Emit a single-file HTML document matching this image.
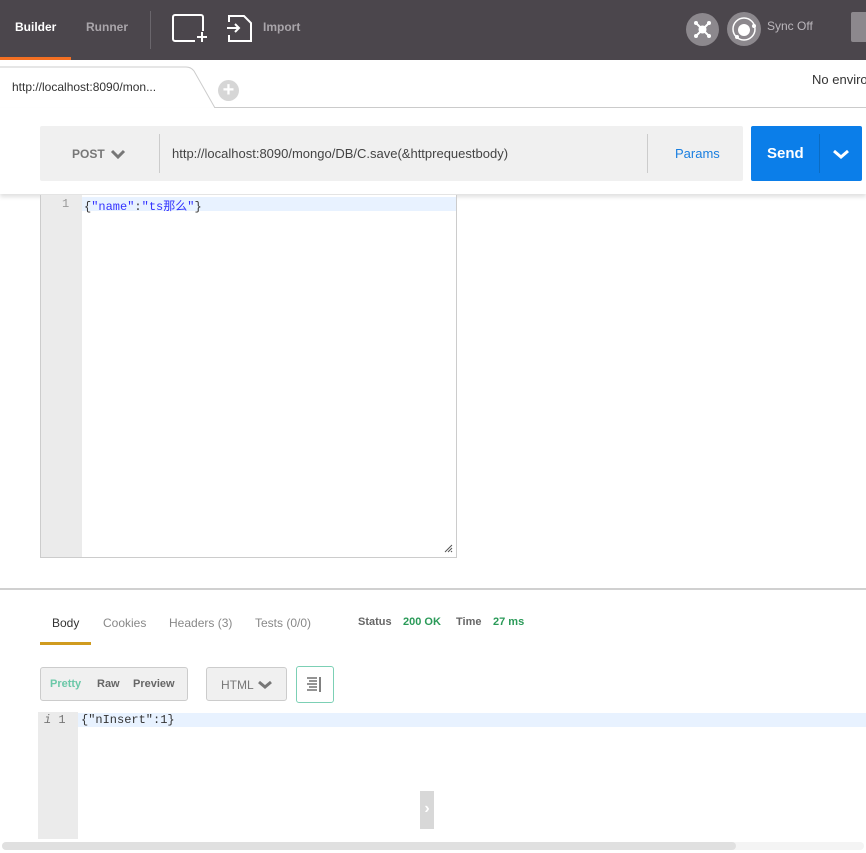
<!DOCTYPE html>
<html><head><meta charset="utf-8"><style>
*{margin:0;padding:0;box-sizing:border-box}
body{width:866px;height:853px;overflow:hidden;background:#fff;font-family:"Liberation Sans","Noto Sans CJK SC",sans-serif;position:relative}
.a{position:absolute;white-space:nowrap}
.mono{font-family:"Liberation Mono","Noto Sans CJK SC",monospace;font-size:12px}
</style></head><body>
<div class="a" style="left:0;top:0;width:866px;height:60px;background:#4b464c"></div>
<div class="a" style="left:15px;top:20px;color:#fff;font-size:12px;font-weight:bold">Builder</div>
<div class="a" style="left:0;top:57px;width:71px;height:3px;background:#f47023"></div>
<div class="a" style="left:86px;top:20px;color:#a9a5aa;font-size:12px;font-weight:bold">Runner</div>
<div class="a" style="left:150px;top:11px;width:1px;height:38px;background:#6a666c"></div>
<svg class="a" style="left:170px;top:13px" width="40" height="32"><rect x="3" y="2" width="30" height="26" rx="2" fill="none" stroke="#fff" stroke-width="2"/><rect x="25" y="18" width="14" height="14" fill="#4b464c"/><path d="M27 24h10M32 19v10" stroke="#fff" stroke-width="2"/></svg>
<svg class="a" style="left:226px;top:13px" width="28" height="32"><path d="M3 9V3h15l7 7v18H3v-6" fill="none" stroke="#fff" stroke-width="2"/><path d="M1 15h12M9 11l4 4-4 4" fill="none" stroke="#fff" stroke-width="2"/></svg>
<div class="a" style="left:263px;top:20px;color:#a9a5aa;font-size:12px;font-weight:bold">Import</div>
<div class="a" style="left:686px;top:13px;width:33px;height:33px;border-radius:50%;background:#8c888d"></div>
<svg class="a" style="left:686px;top:13px" width="33" height="33"><path d="M10 10l13 13M23 10L10 23" stroke="#fff" stroke-width="2"/><circle cx="16.5" cy="16.5" r="4" fill="#fff"/><circle cx="10" cy="10" r="2" fill="#fff"/><circle cx="23" cy="10" r="2" fill="#fff"/><circle cx="10" cy="23" r="2" fill="#fff"/><circle cx="23" cy="23" r="2" fill="#fff"/></svg>
<div class="a" style="left:727px;top:12px;width:34px;height:34px;border-radius:50%;background:#8c888d"></div>
<svg class="a" style="left:727px;top:12px" width="34" height="34"><circle cx="17" cy="17" r="11" fill="none" stroke="#fff" stroke-width="1.5"/><circle cx="17" cy="18" r="6" fill="#fff"/><circle cx="27" cy="14" r="2" fill="#fff"/><circle cx="10" cy="25" r="2" fill="#fff"/></svg>
<div class="a" style="left:767px;top:19px;color:#bbb7bc;font-size:12px">Sync Off</div>
<div class="a" style="left:851px;top:12px;width:15px;height:30px;background:#8c888d;border-radius:2px 0 0 2px"></div>

<div class="a" style="left:0;top:107px;width:866px;height:1px;background:#ccc"></div>
<svg class="a" style="left:0;top:66px" width="220" height="43"><path d="M0 1H186Q191 1 194 5L215 42" fill="#fff" stroke="#ccc"/><rect x="0" y="41" width="214" height="3" fill="#fff"/></svg>
<div class="a" style="left:12px;top:80px;font-size:12px;color:#333">http://localhost:8090/mon...</div>
<div class="a" style="left:218px;top:80px;width:21px;height:21px;border-radius:50%;background:#d6d6d6;color:#fff;font-size:20px;line-height:20px;text-align:center;font-weight:bold">+</div>
<div class="a" style="left:812px;top:72px;font-size:13px;color:#333">No enviro</div>

<div class="a" style="left:0;top:108px;width:866px;height:86px;background:#fff;box-shadow:0 3px 4px rgba(0,0,0,.12)"></div>
<div class="a" style="left:40px;top:126px;width:703px;height:55px;background:#f0f0f0;border-radius:2px"></div>
<div class="a" style="left:72px;top:147px;font-size:12px;color:#777;font-weight:bold">POST</div>
<svg class="a" style="left:110px;top:149px" width="16" height="10"><path d="M2 2l6 6 6-6" fill="none" stroke="#777" stroke-width="3"/></svg>
<div class="a" style="left:159px;top:134px;width:1px;height:39px;background:#ccc"></div>
<div class="a" style="left:172px;top:146px;font-size:13px;color:#444">http://localhost:8090/mongo/DB/C.save(&amp;httprequestbody)</div>
<div class="a" style="left:647px;top:134px;width:1px;height:39px;background:#ccc"></div>
<div class="a" style="left:675px;top:146px;font-size:13px;color:#1a7fe0">Params</div>
<div class="a" style="left:751px;top:126px;width:111px;height:55px;background:#0b7ee9;border-radius:2px"></div>
<div class="a" style="left:767px;top:145px;font-size:15px;color:#fff;font-weight:bold">Send</div>
<div class="a" style="left:819px;top:134px;width:1px;height:39px;background:#0a6cc4"></div>
<svg class="a" style="left:832px;top:149px" width="18" height="10"><path d="M2 2l7 6 7-6" fill="none" stroke="#fff" stroke-width="3"/></svg>

<div class="a" style="left:40px;top:195px;width:417px;height:363px;border:1px solid #ccc;border-top:none;background:#fff"></div>
<div class="a" style="left:41px;top:195px;width:41px;height:362px;background:#ebebeb"></div>
<div class="a" style="left:82px;top:197px;width:374px;height:14px;background:#e8f2ff"></div>
<div class="a mono" style="left:62px;top:197px;color:#999">1</div>
<div class="a mono" style="left:84px;top:197px;color:#333">{<span style="color:#3333ff">"name"</span>:<span style="color:#3333ff">"ts那么"</span>}</div>
<svg class="a" style="left:443px;top:543px" width="10" height="10"><path d="M9 2L2 9M9 5L5 9M9 8L8 9" stroke="#555"/></svg>

<div class="a" style="left:0;top:588px;width:866px;height:2px;background:#d0d0d0"></div>
<div class="a" style="left:52px;top:616px;font-size:12px;color:#333">Body</div>
<div class="a" style="left:40px;top:642px;width:51px;height:3px;background:#d09b1f"></div>
<div class="a" style="left:103px;top:616px;font-size:12px;color:#888">Cookies</div>
<div class="a" style="left:169px;top:616px;font-size:12px;color:#888">Headers (3)</div>
<div class="a" style="left:255px;top:616px;font-size:12px;color:#888">Tests (0/0)</div>
<div class="a" style="left:358px;top:616px;font-size:11px;color:#666;font-weight:bold">Status</div>
<div class="a" style="left:403px;top:616px;font-size:11px;color:#2a9a58;font-weight:bold">200 OK</div>
<div class="a" style="left:456px;top:616px;font-size:11px;color:#666;font-weight:bold">Time</div>
<div class="a" style="left:493px;top:616px;font-size:11px;color:#2a9a58;font-weight:bold">27 ms</div>

<div class="a" style="left:40px;top:667px;width:148px;height:34px;background:#f0f0f0;border:1px solid #ccc;border-radius:3px"></div>
<div class="a" style="left:50px;top:678px;font-size:11px;color:#6bc8a8;font-weight:bold">Pretty</div>
<div class="a" style="left:97px;top:678px;font-size:11px;color:#666;font-weight:bold">Raw</div>
<div class="a" style="left:133px;top:678px;font-size:11px;color:#666;font-weight:bold">Preview</div>
<div class="a" style="left:206px;top:667px;width:81px;height:34px;background:#f0f0f0;border:1px solid #ccc;border-radius:3px"></div>
<div class="a" style="left:221px;top:678px;font-size:12px;color:#777">HTML</div>
<svg class="a" style="left:257px;top:680px" width="16" height="10"><path d="M2 2l6 5 6-5" fill="none" stroke="#777" stroke-width="3"/></svg>
<div class="a" style="left:296px;top:666px;width:38px;height:37px;border:1px solid #7cd0b5;border-radius:3px;background:#fff"></div>
<svg class="a" style="left:305px;top:675px" width="20" height="18"><path d="M2 3h10M4 6h8M2 9h10M4 12h8M2 15h10" stroke="#555" stroke-width="1.3"/><path d="M15 2v15" stroke="#555" stroke-width="1.5"/></svg>

<div class="a" style="left:38px;top:712px;width:40px;height:127px;background:#ebebeb"></div>
<div class="a" style="left:78px;top:713px;width:788px;height:14px;background:#e8f2ff"></div>
<div class="a mono" style="left:44px;top:713px;color:#777"><i>i</i> 1</div>
<div class="a mono" style="left:81px;top:713px;color:#333">{"nInsert":1}</div>
<div class="a" style="left:420px;top:791px;width:14px;height:38px;background:#d8d8d8;color:#fff;font-size:16px;font-weight:bold;text-align:center;line-height:36px">›</div>
<div class="a" style="left:2px;top:842px;width:862px;height:8px;background:#f4f4f4;border-radius:4px"></div>
<div class="a" style="left:2px;top:842px;width:734px;height:8px;background:#e0e0e0;border-radius:4px"></div>
</body></html>
